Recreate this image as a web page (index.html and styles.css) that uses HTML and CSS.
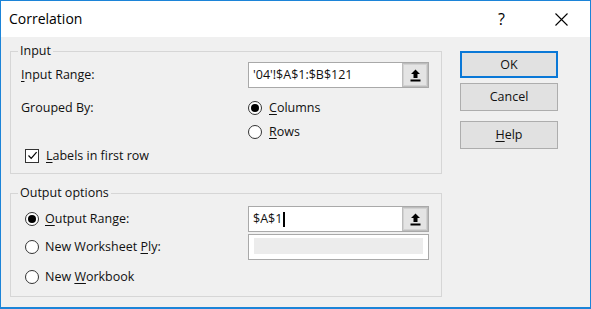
FILE: index.html
```html
<!DOCTYPE html>
<html>
<head>
<meta charset="utf-8">
<link rel="stylesheet" href="styles.css">
</head>
<body>
<div class="window">
  <div class="titlebar">
    <span class="title">Correlation</span>
    <span class="cap-btn cap-help">?</span>
    <span class="cap-btn cap-close">
      <svg width="13" height="13" viewBox="0 0 13 13"><path d="M0.5 0.5 L12.5 12.5 M12.5 0.5 L0.5 12.5" stroke="#000" stroke-width="1.1" fill="none"/></svg>
    </span>
  </div>
  <div class="main">
    <div class="groups">
      <fieldset class="group group-input">
        <legend>Input</legend>
        <div class="input-grid">
          <div class="lbl"><u>I</u>nput Range:</div>
          <div class="textbox">
            <span class="tb-text">'04'!$A$1:$B$121</span>
            <span class="ref-btn">
              <svg width="11" height="13" viewBox="0 0 11 13"><path d="M5.5 0.5 L10 5 L7.5 5 L7.5 9 L3.5 9 L3.5 5 L1 5 Z" fill="#000"/><rect x="0.5" y="10.5" width="10" height="2" fill="#000"/></svg>
            </span>
          </div>
          <div class="lbl grouped">Grouped By:</div>
          <div class="radios">
            <div class="opt"><span class="radio checked"></span><span><u>C</u>olumns</span></div>
            <div class="opt"><span class="radio"></span><span><u>R</u>ows</span></div>
          </div>
          <div class="opt check-row">
            <span class="checkbox"><svg width="11" height="11" viewBox="0 0 11 11"><path d="M1.5 5.5 L4.2 8.3 L9.6 2.2" stroke="#000" stroke-width="1.2" fill="none"/></svg></span>
            <span><u>L</u>abels in first row</span>
          </div>
        </div>
      </fieldset>
      <fieldset class="group group-output">
        <legend>Output options</legend>
        <div class="out-row first">
          <div class="opt out-opt"><span class="radio checked"></span><span><u>O</u>utput Range:</span></div>
          <div class="textbox">
            <span class="tb-text">$A$1<span class="caret"></span></span>
            <span class="ref-btn">
              <svg width="11" height="13" viewBox="0 0 11 13"><path d="M5.5 0.5 L10 5 L7.5 5 L7.5 9 L3.5 9 L3.5 5 L1 5 Z" fill="#000"/><rect x="0.5" y="10.5" width="10" height="2" fill="#000"/></svg>
            </span>
          </div>
        </div>
        <div class="out-row second">
          <div class="opt out-opt"><span class="radio"></span><span>New Worksheet <u>P</u>ly:</span></div>
          <div class="textbox disabled"><span class="fill"></span></div>
        </div>
        <div class="out-row third">
          <div class="opt out-opt"><span class="radio"></span><span>New <u>W</u>orkbook</span></div>
        </div>
      </fieldset>
    </div>
    <div class="buttons">
      <div class="btn default">OK</div>
      <div class="btn">Cancel</div>
      <div class="btn help"><u>H</u>elp</div>
    </div>
  </div>
</div>
</body>
</html>
```

FILE: styles.css
```css
* { box-sizing: border-box; }
body {
  margin: 0;
  font-family: "Open Sans", "Noto Sans", sans-serif;
  font-size: 12.5px;
  line-height: 16px;
  color: #111;
  background: #fff;
}
u { text-decoration: underline; text-underline-offset: 2px; text-decoration-thickness: 1px; }
.window {
  width: 591px;
  height: 309px;
  border: 1px solid #1c84d8;
  border-bottom-width: 2px;
  background: #f0f0f0;
  display: flex;
  flex-direction: column;
}
.titlebar {
  height: 36px;
  background: #fff;
  display: flex;
  align-items: center;
  padding-left: 8px;
  flex: none;
}
.title {
  flex: 1;
  font-size: 14px;
  color: #000;
}
.cap-btn {
  width: 58px;
  height: 36px;
  display: flex;
  align-items: center;
  justify-content: center;
}
.cap-help {
  font-size: 16px;
  color: #000;
  padding-right: 3px;
}
.main {
  display: flex;
  padding: 6px 0 0 9px;
}
.groups {
  width: 432px;
  display: flex;
  flex-direction: column;
}
.group {
  margin: 0;
  min-width: 0;
  border: 1px solid #d6d6d6;
  padding: 0 12px 6px 10px;
}
.group legend {
  padding: 0 2px;
  margin-left: -3px;
  line-height: 16px;
}
.group-output { margin-top: 11px; padding-bottom: 6px; }
.input-grid {
  margin-top: 3px;
  display: grid;
  grid-template-columns: 227px 181px;
  grid-template-rows: 26px 56px 23px;
}
.lbl { align-self: center; }
.grouped { align-self: start; margin-top: 12px; }
.radios { display: flex; flex-direction: column; padding-top: 8px; }
.radios .opt { height: 24px; }
.opt {
  display: flex;
  align-items: center;
  gap: 7px;
}
.check-row { grid-column: 1 / 3; margin-left: 4px; }
.radio {
  width: 14px;
  height: 14px;
  border: 1px solid #333;
  border-radius: 50%;
  background: #fff;
  display: flex;
  align-items: center;
  justify-content: center;
  flex: none;
}
.radio.checked::after {
  content: "";
  width: 8px;
  height: 8px;
  border-radius: 50%;
  background: #000;
}
.checkbox {
  width: 14px;
  height: 14px;
  border: 1px solid #333;
  background: #fff;
  display: flex;
  align-items: center;
  justify-content: center;
  flex: none;
}
.textbox {
  width: 181px;
  height: 26px;
  border: 1px solid #a9a9a9;
  background: #fff;
  display: flex;
  align-items: center;
  justify-content: space-between;
}
.tb-text {
  padding-left: 4px;
  display: flex;
  align-items: center;
}
.caret {
  display: inline-block;
  width: 2px;
  height: 15px;
  background: #000;
  margin-left: 1px;
}
.ref-btn {
  width: 26px;
  height: 24px;
  background: #e4e4e4;
  border: 1px solid #bdbdbd;
  box-shadow: inset 0 0 0 1px #d2d2d2;
  display: flex;
  align-items: center;
  justify-content: center;
}
.textbox.disabled {
  padding: 3px 5px 5px 5px;
  align-items: stretch;
}
.fill { flex: 1; background: #ececec; }
.out-row {
  display: flex;
  align-items: center;
}
.out-row.first { margin-top: 5px; }
.out-row.second { margin-top: 2px; }
.out-row.third { margin-top: 4px; height: 26px; }
.out-opt { width: 227px; padding-left: 4px; gap: 6px; }
.buttons {
  margin-left: 18px;
  margin-top: 8px;
  width: 98px;
  display: flex;
  flex-direction: column;
}
.btn {
  height: 27px;
  border: 1px solid #adadad;
  background: #e1e1e1;
  display: flex;
  align-items: center;
  justify-content: center;
  color: #111;
}
.btn.default { border: 2px solid #0a78d7; }
.btn + .btn { margin-top: 5px; height: 28px; }
.btn.help { margin-top: 10px; }
```
